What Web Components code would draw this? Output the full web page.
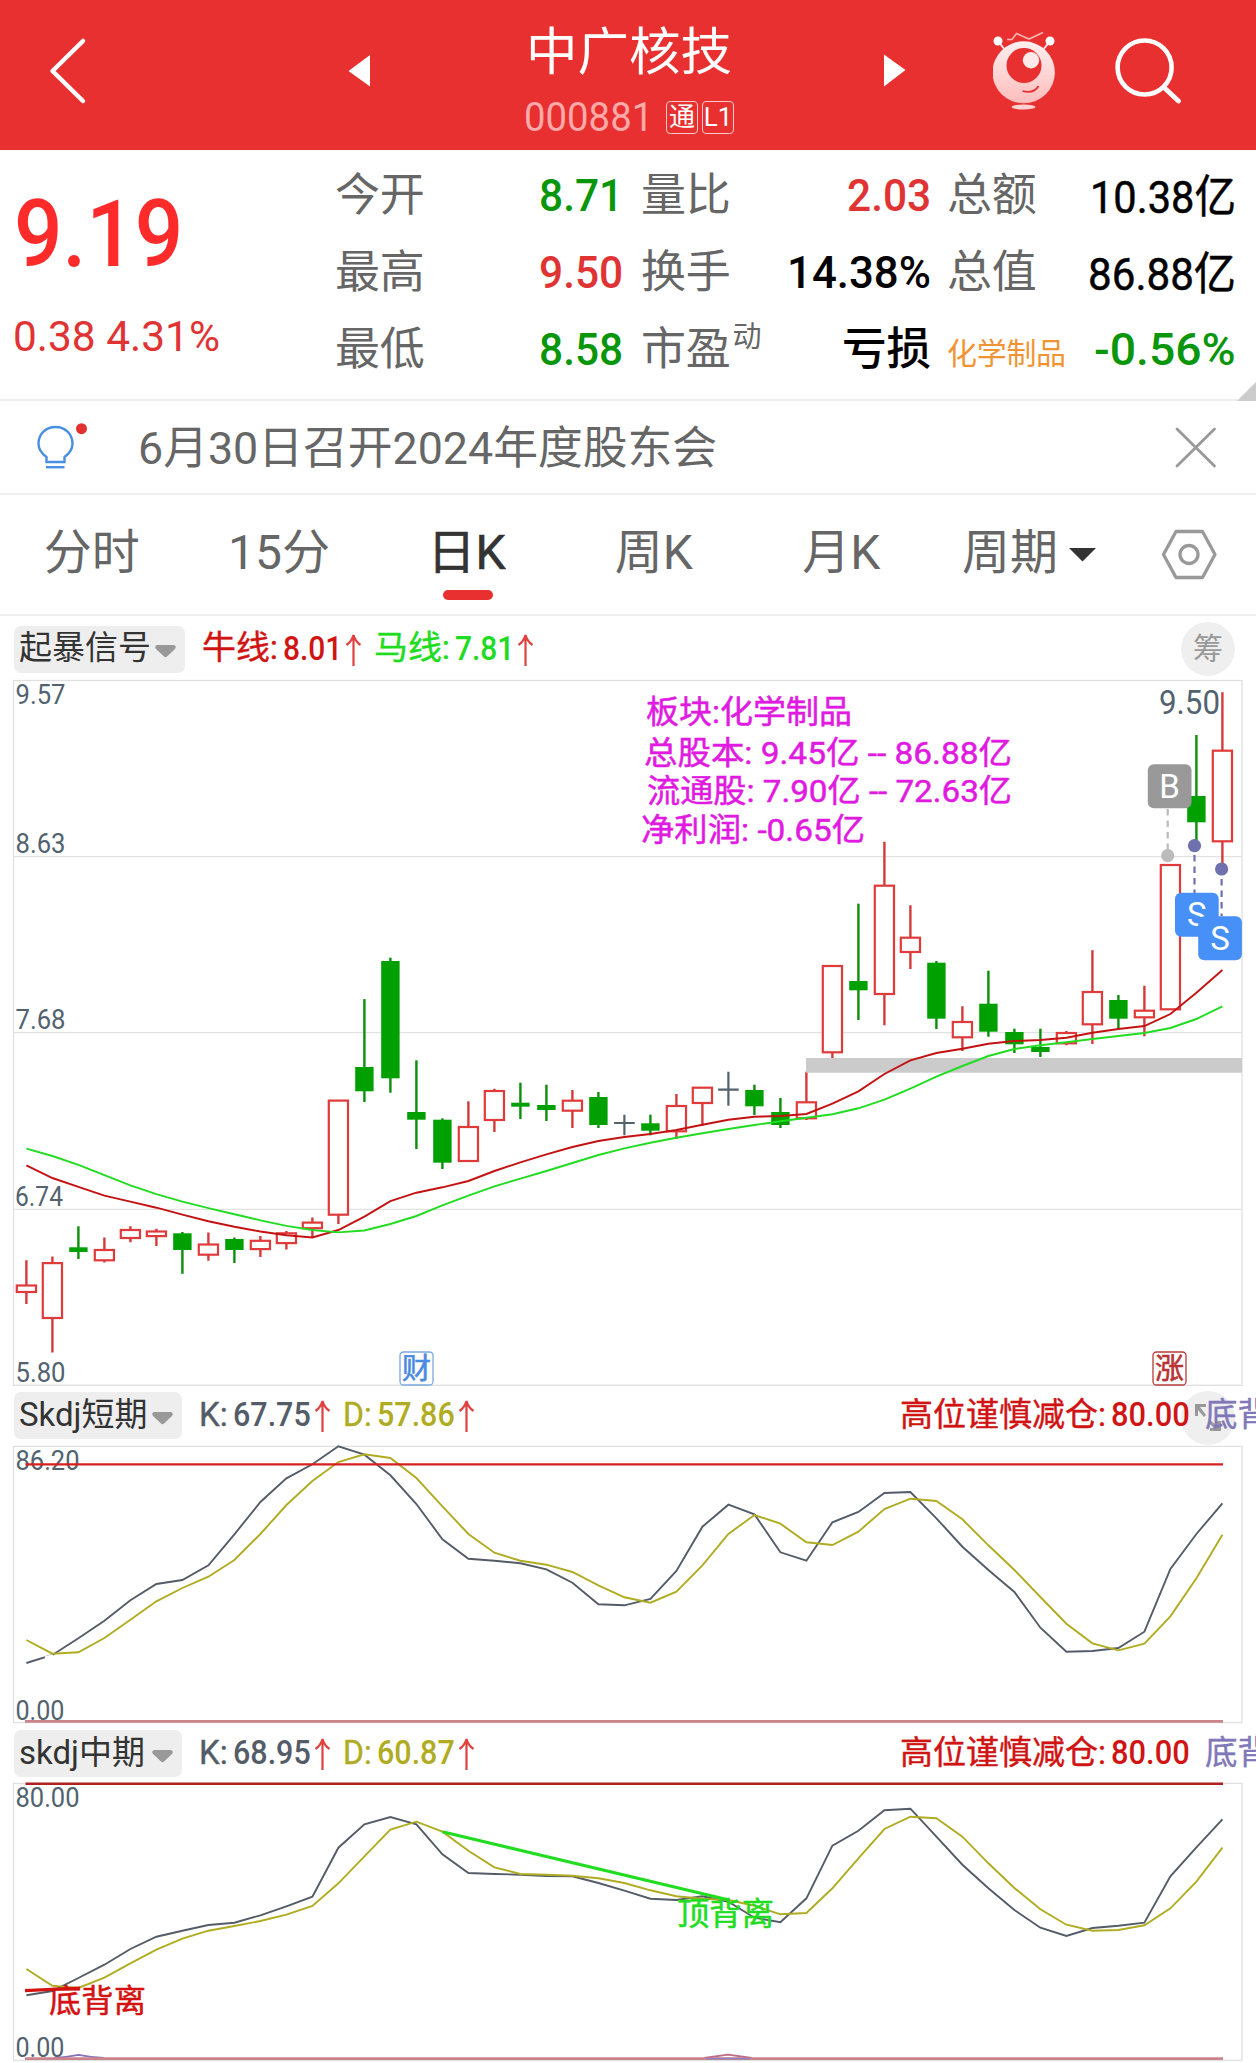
<!DOCTYPE html>
<html lang="zh-CN">
<head>
<meta charset="utf-8">
<title>中广核技 000881</title>
<style>
html,body{
	margin:0;
	background:#fff;
}
body{
	width:1256px;
	height:2063px;
	overflow:hidden;
	font-family:Roboto,"Noto Sans CJK SC",sans-serif;
	color:#666;
}
</style>
</head>
<body>
<stock-page></stock-page>

<template id="header-tpl">
<style>
:host{
	display:grid;
	grid-template-columns:348px 178px 205px 153px 109px 1fr;
	height:150px;
	background:#e83030;
	color:#fff;
}
svg{
	display:block;
	height:150px;
}
.title{
	padding-top:27px;
	display:flex;
	flex-direction:column;
	gap:20px;
}
.name{
	font-size:51px;
	line-height:52px;
	white-space:nowrap;
}
.code{
	display:flex;
	align-items:center;
	gap:4px;
	height:36px;
	margin:0 -6px 0 -2px;
	font-size:41px;
	line-height:1;
}
.code fit-text{
	color:#ffa9a9;
	margin-right:9px;
}
.tag{
	box-sizing:border-box;
	width:32px;
	height:33px;
	border:1.5px solid #ffc9c9;
	border-radius:4px;
	font-size:26px;
	line-height:31px;
	text-align:center;
	flex:none;
}
</style>
<svg width="348" viewBox="0 0 348 150"><path d="M83 41L52.500 71L83 101" fill="none" stroke="#fff" stroke-width="4.500" stroke-linecap="round" stroke-linejoin="round"/></svg>
<svg width="178" viewBox="348 0 178 150"><path d="M348.500 71L370 55V86.500Z" fill="#fff"/></svg>
<div class="title">
	<div class="name"><fit-text w="206"><slot name="name"></slot></fit-text></div>
	<div class="code"><fit-text w="129"><slot name="code"></slot></fit-text><span class="tag">通</span><span class="tag">L1</span></div>
</div>
<svg width="153" viewBox="731 0 153 150"></svg>
<svg width="109" viewBox="884 0 109 150"><path d="M905.500 70L884 54.500V86.500Z" fill="#fff"/></svg>
<svg width="263" viewBox="993 0 263 150">
	<defs><linearGradient id="body" x1="0" y1="0" x2="0" y2="1"><stop offset="0" stop-color="#fff0f0"/><stop offset="1" stop-color="#ffbcbc"/></linearGradient></defs>
	<g fill="none" stroke="#ffe4e4" stroke-width="2">
		<path d="M998 41L1005 50M1050 41L1043 50"/>
		<path d="M1007 39.500H1012L1016.500 33.500L1029 39L1043 32.500" stroke="#ffb3b3" stroke-width="1.600"/>
	</g>
	<circle cx="998" cy="41" r="4.500" fill="#fff"/><circle cx="1050" cy="41" r="4.500" fill="#fff"/>
	<ellipse cx="1023.700" cy="72.300" rx="31.200" ry="31" fill="url(#body)"/>
	<circle cx="1024" cy="65.500" r="17.500" fill="#e83030"/>
	<circle cx="1031" cy="60.300" r="8.200" fill="#ffe9e9"/>
	<path d="M1022.500 91Q1034 94 1038.500 86" fill="none" stroke="#e83030" stroke-width="1.800"/>
	<ellipse cx="1023.500" cy="107" rx="12" ry="2.500" fill="#ffd2d2"/>
	<circle cx="1144.600" cy="67.500" r="27" fill="none" stroke="#fff" stroke-width="4.600"/>
	<path d="M1164 87.500L1178.500 101" stroke="#fff" stroke-width="4.800" stroke-linecap="round"/>
</svg>
</template>

<template id="quote-tpl">
<style>
:host{
	display:grid;
	grid-template-columns:336px 287px 289px 287px;
	grid-template-rows:repeat(3,77px);
	box-sizing:border-box;
	height:251px;
	padding-top:7px;
	border-bottom:2px solid #efefef;
	position:relative;
	font-size:45px;
	line-height:1;
}
.last{
	grid-row:1 / 4;
	display:flex;
	flex-direction:column;
	color:#ff2a2a;
}
.price{
	margin:32px 0 0 14px;
	font-size:92px;
	font-weight:500;
}
.change{
	margin:35px 0 0 13px;
	font-size:42px;
	color:#e03434;
}
::slotted(quote-item:nth-child(3n+1)){
	margin-left:-1px;
}
::slotted(quote-item:nth-child(3n+2)){
	margin-left:18px;
	margin-right:-19px;
}
::slotted(quote-item:nth-child(3n)){
	margin-left:35px;
	margin-right:-37px;
}
.corner{
	position:absolute;
	right:0;
	bottom:-2px;
	width:19px;
	height:19px;
	background:#ccc;
	clip-path:polygon(100% 0,100% 100%,0 100%);
}
</style>
<div class="last">
	<fit-text class="price" w="169">9.19</fit-text>
	<fit-text class="change" w="207">0.38 4.31%</fit-text>
</div>
<slot></slot>
<div class="corner"></div>
</template>

<template id="notice-tpl">
<style>
:host{
	display:flex;
	align-items:center;
	box-sizing:border-box;
	height:94px;
	border-bottom:2px solid #efefef;
	font-size:45px;
	line-height:1;
}
.text{
	width:1030px;
	padding-top:2px;
}
</style>
<svg width="138" height="92" viewBox="0 401 138 92" fill="none" stroke="#4a90e2" stroke-width="2.400">
	<path d="M46.500 462V457C41.500 453.500 38.500 449 38.500 443.500C38.500 434 46 427 55.500 427S72.500 434 72.500 443.500C72.500 449 69.500 453.500 64.500 457V462Z"/>
	<path d="M46 467.200H64.500"/>
	<circle cx="81.500" cy="428.700" r="5.500" fill="#e03030" stroke="none"/>
</svg>
<div class="text"><fit-text w="579"><slot></slot></fit-text></div>
<svg width="88" height="92" viewBox="1168 401 88 92"><path d="M1177 429L1214.500 466M1214.500 429L1177 466" stroke="#999" stroke-width="2.800" stroke-linecap="round"/></svg>
</template>

<template id="tabs-tpl">
<style>
:host{
	display:flex;
	box-sizing:border-box;
	height:121px;
	border-bottom:2px solid #efefef;
	font-size:48px;
	line-height:116px;
}
.tab{
	flex:none;
	width:187.4px;
	text-align:center;
}
.tab span{
	margin-right:4px;
}
.on{
	color:#333;
	-webkit-text-stroke:.6px #333;
}
.on i{
	display:block;
	width:50px;
	height:10px;
	margin:-21px auto 0;
	border-radius:5px;
	background:#e83030;
}
.more{
	width:98px;
	margin-left:25px;
	white-space:nowrap;
}
svg{
	display:block;
}
</style>
<div class="tab"><span>分时</span></div>
<div class="tab"><span>15分</span></div>
<div class="tab on"><span>日K</span><i></i></div>
<div class="tab"><span>周K</span></div>
<div class="tab"><span>月K</span></div>
<div class="more">周期</div>
<svg width="196" height="119" viewBox="1060 495 196 119">
	<path d="M1069 548H1096L1082.500 561.500Z" fill="#333"/>
	<g fill="none" stroke="#999" stroke-width="3.300" stroke-linejoin="round">
		<path d="M1176 531.500H1202.500L1215 554.500L1202.500 577.500H1176L1163.500 554.500Z"/>
		<circle cx="1189" cy="554.500" r="9"/>
	</g>
</svg>
</template>

<template id="bar-tpl">
<style>
:host{
	display:flex;
	align-items:center;
	box-sizing:border-box;
	width:1256px;
	height:61px;
	padding-left:14px;
	overflow:hidden;
	font-size:33px;
	line-height:1;
}
.pill{
	box-sizing:border-box;
	display:flex;
	align-items:center;
	justify-content:space-between;
	flex:none;
	width:var(--pill,168px);
	height:47px;
	padding:0 8px 0 5px;
	margin-right:17px;
	border-radius:7px;
	background:#eee;
	color:#333;
}
.pill span{
	white-space:nowrap;
	margin-top:-3px;
}
.pill svg{
	flex:none;
	margin-top:4px;
}
</style>
<div class="pill"><span><slot name="name"></slot></span><svg width="23" height="14" viewBox="0 0 23 14"><path d="M3 1H20Q23 2 21 5L13 12.500Q11.500 14 10 12.500L2 5Q0 2 3 1Z" fill="#999"/></svg></div>
<slot></slot>
</template>

<script>
// text squeezed or stretched to a given width
class FitText extends HTMLElement{
	constructor(){
		super();
		this.attachShadow({ mode : 'open'})
		this.shadowRoot.innerHTML = `
<style>
:host{
	display:inline-block;
	flex:none;
	white-space:nowrap;
}
span{
	display:inline-block;
	transform-origin:0 50%;
}
</style><span><slot></slot></span>`;
	}
	connectedCallback(){
		const w = parseFloat(this.getAttribute('w'))
		if(!w) return
		const span = this.shadowRoot.querySelector('span')
		this.style.width = w + 'px'
		span.style.transform = 'scaleX(' + w / span.offsetWidth + ')'
	}
}

function fromTemplate(name, id){
	const template = document.getElementById(id)
	window.customElements.define(name, class extends HTMLElement{
		constructor(){
			super();
			this.attachShadow({ mode : 'open'})
			this.shadowRoot.appendChild(template.content.cloneNode(true));
		}
	});
}

class QuoteItem extends HTMLElement{
	constructor(){
		super();
		this.attachShadow({ mode : 'open'})
	}
	connectedCallback(){
		const sup = this.getAttribute('sup')
		this.shadowRoot.innerHTML = `
<style>
:host{
	display:flex;
	align-items:center;
	justify-content:space-between;
}
.label{
	color:#666;
	white-space:nowrap;
	letter-spacing:-.3px;
}
.label.small{
	font-size:30px;
	padding-top:8px;
	color:#f09433;
}
sup{
	font-size:29px;
	line-height:0;
	vertical-align:18px;
	margin-left:2px;
}
.value{
	color:${this.getAttribute('color') || '#000'};
	font-weight:${this.hasAttribute('thin') ? 400 : 500};
	${this.hasAttribute('low') ? 'padding-top:3px;-webkit-text-stroke:.5px #000;' : ''}
}
</style>
<span class="label ${this.hasAttribute('small') ? 'small' : ''}">${this.getAttribute('label')}${sup ? '<sup>' + sup + '</sup>' : ''}</span>
<fit-text class="value" w="${this.getAttribute('w')}">${this.getAttribute('value')}</fit-text>`;
	}
}

// name, value and the arrow that shows the trend
class LegendItem extends HTMLElement{
	constructor(){
		super();
		this.attachShadow({ mode : 'open'})
	}
	connectedCallback(){
		const arrow = this.hasAttribute('up') ? '<svg width="17" height="34" viewBox="0 0 17 34"><path d="M8.500 33V2M1.500 12Q7 8 8.500 2Q10 8 15.500 12" fill="none" stroke="#e04040" stroke-width="2.200"/></svg>' : ''
		this.shadowRoot.innerHTML = `
<style>
:host{
	display:flex;
	align-items:center;
	flex:none;
	margin-top:-3px;
	margin-right:12px;
	color:${this.getAttribute('color')};
}
.name{
	margin-right:5px;
	-webkit-text-stroke:.4px currentColor;
}
.value{
	margin-right:3px;
	font-size:34px;
	font-weight:500;
}
svg{
	margin-top:4px;
}
</style>
<fit-text class="name" w="${this.getAttribute('nw')}">${this.getAttribute('name')}</fit-text>
<fit-text class="value" w="${this.getAttribute('vw')}">${this.getAttribute('value')}</fit-text>${arrow}`;
	}
}

class RoundButton extends HTMLElement{
	constructor(){
		super();
		this.attachShadow({ mode : 'open'})
		this.shadowRoot.innerHTML = `
<style>
:host{
	display:flex;
	align-items:center;
	justify-content:center;
	flex:none;
	width:54px;
	height:54px;
	border-radius:50%;
	background:#efefef;
	color:#999;
	font-size:30px;
}
</style><slot></slot>`;
	}
}

const STEP = 26
const LEFT = 26.4
const at = i => +(LEFT + i * STEP).toFixed(1)
const line = (ys, color, width) => `<polyline points="${ys.map((y, i) => at(i) + ',' + y).join(' ')}" fill="none" stroke="${color}" stroke-width="${width || 1.9}"/>`
const label = (x, y, w, size, text, color, extra) => `<text x="${x}" y="${y}" font-size="${size}" fill="${color || '#52636f'}" ${w ? `textLength="${w}" lengthAdjust="spacingAndGlyphs"` : ''} ${extra || ''}>${text}</text>`

// type, high, low, body top, body bottom
const CANDLES = [
	['r',1260.3,1304,1285.5,1292],['r',1256.6,1352.5,1263.1,1318],['g',1226.3,1259,1247.3,1252],['r',1237.5,1262.6,1250,1260.3],
	['r',1226.3,1242.2,1230,1238],['r',1228.7,1246,1231.5,1236.1],['g',1232,1273.8,1233.3,1250],['r',1232.4,1260.8,1244.5,1254.7],
	['g',1237.5,1263,1239,1250],['r',1236,1257,1240.8,1249.1],['r',1231,1249.6,1233.3,1243.1],['r',1217.5,1238,1222.6,1228.2],
	['r',1100.6,1224,1100.6,1214.7],['g',999.1,1102,1067,1091.3],['g',957.7,1092.7,961,1078.3],['g',1060.3,1149,1112,1119.7],
	['g',1118.3,1169,1119.7,1162.7],['r',1101.3,1161,1127,1161],['r',1088.7,1132,1091,1120],['g',1082.7,1119,1102.7,1106.7],
	['g',1084.7,1121,1105,1110],['r',1090,1128,1100.7,1110.7],['g',1092,1128,1097,1125],['x',1114.7,1135.3,1123,1123],
	['g',1114.7,1135.3,1123.3,1130.7],['r',1094,1139,1106,1131.3],['r',1087.7,1126,1087.7,1103],['x',1071.7,1105.7,1089.7,1089.7],
	['g',1084.7,1115,1090,1106.3],['g',1098,1128,1112,1125],['r',1071.7,1120,1102.3,1118.3],['r',966,1058.7,966,1052.3],
	['g',903.7,1020,981,990.3],['r',841.7,1025.3,885.7,994],['r',905.3,969,937.7,952],['g',961,1029,962.7,1018.7],
	['r',1006.3,1051,1022,1037.3],['g',970.7,1036.7,1003.7,1031.7],['g',1028.7,1053,1032,1044.3],['g',1028.7,1057,1047,1052],
	['r',1031,1045.3,1033,1043.3],['r',950.3,1044,992,1024.3],['g',995,1029.3,1000,1018.7],['r',985.7,1036.3,1010.7,1017.3],
	['r',865,1009.3,865,1009.3],['g',735,840,796,822.3],['r',692.3,863,750.7,841.3]
]
const BULL = [1165.3,1178,1186.8,1195.6,1201.7,1207.7,1214.7,1221.2,1226.8,1231.5,1235.2,1237.5,1230,1216.6,1201.2,1192.7,1187.3,1181,1171,1162.3,1154.3,1147,1141,1137,1134,1130,1124.7,1119.7,1116.7,1116,1114,1103.7,1091.3,1074,1060.3,1053,1048.7,1043.7,1041,1040,1037.7,1032.7,1029,1026,1014,992.7,970]
const HORSE = [1148.6,1156,1164.9,1175.1,1185.4,1194.2,1201.7,1208.2,1214.2,1220.3,1225.9,1230,1232.4,1230.5,1224,1216,1205.3,1195.7,1186.3,1178.7,1171,1163,1155,1148.3,1142.7,1137.7,1133.3,1129,1125,1121.3,1117.7,1114.3,1108.3,1099.7,1088.7,1076.7,1066,1056,1049,1045.3,1042.3,1039,1036,1033,1028,1019,1006.3]
const SHORT_K = [1663,1655,1638.3,1620.7,1600.3,1584,1580,1565.3,1534.3,1502,1478.3,1464.3,1446.3,1454.7,1475.3,1504,1539.3,1558.7,1560.7,1563.3,1569.3,1582.7,1604.3,1605.3,1599,1571,1526.7,1504.7,1514.3,1552.3,1560.7,1522.3,1512,1493,1492,1518.3,1546.7,1570,1592,1627.7,1651.7,1651,1648,1631.7,1569,1534,1503.3]
const SHORT_D = [1640,1653.7,1652.3,1638,1619.7,1601.3,1588,1576.7,1560,1534,1505,1481,1462,1454.3,1458,1478,1506.3,1534,1552.7,1560.7,1564.7,1572,1585.3,1597.3,1602.7,1591.7,1565.3,1534,1515,1523.7,1542.3,1545,1531.7,1509,1498.7,1501,1519.3,1545.3,1570,1597,1623.7,1643.3,1650.3,1643.7,1616.3,1578.3,1534.7]
const MID_K = [1995.3,1991,1978,1964.7,1949,1936.7,1930.7,1925,1922.7,1915.3,1906.3,1896.7,1847.7,1824.3,1817,1824.3,1854.3,1873,1874,1874.7,1876,1876.3,1883,1890.7,1898.7,1900,1896.3,1901.7,1917.7,1922.3,1898.3,1845.7,1830.7,1810.3,1808.7,1836.7,1864.7,1888.3,1910,1927.7,1936,1928,1925.7,1922.7,1876.3,1847.3,1819.3]
const MID_D = [1969,1985.7,1988,1977.7,1963.3,1949.7,1938.7,1930.7,1926,1921,1914.7,1906,1883.3,1856.3,1829.7,1821.7,1831.7,1850.7,1867.3,1874,1874.7,1875.7,1878.3,1883,1890.3,1896.3,1898.7,1900,1905.7,1914.3,1913,1888.3,1858.3,1829,1816.7,1818.3,1836.7,1863.3,1888,1909.3,1924.7,1930.7,1930,1925.3,1908.3,1881.7,1847.7]

class BaseChart extends HTMLElement{
	constructor(){
		super();
		this.attachShadow({ mode : 'open'})
	}
	frame(top, height, y1, y2, content){
		this.shadowRoot.innerHTML = `
<style>
:host{
	display:block;
}
svg{
	display:block;
}
</style>
<svg width="1256" height="${height}" viewBox="0 ${top} 1256 ${height}">
<rect x="13.500" y="${y1}" width="1228.500" height="${y2 - y1}" fill="none" stroke="#e0e0e0" stroke-width="1.300"/>
${content}
</svg>`;
	}
}

class KlineChart extends BaseChart{
	candle(c, i){
		const [type, high, low, top, bottom] = c
		const x = at(i)
		if(type == 'x'){
			return `<path d="M${x} ${high}V${low}M${x - 10.3} ${top}H${x + 10.3}" stroke="#52636f" stroke-width="2.200"/>`
		}
		if(type == 'g'){
			return `<path d="M${x} ${high}V${low}" stroke="#0b8f0b" stroke-width="2.400"/><rect x="${x - 9.2}" y="${top}" width="18.400" height="${bottom - top}" fill="#00a000"/>`
		}
		return `<path d="M${x} ${high}V${top}M${x} ${bottom}V${low}" stroke="#d23c3c" stroke-width="2.400"/><rect x="${x - 9.6}" y="${top}" width="19.200" height="${bottom - top}" fill="#fff" stroke="#e03a3a" stroke-width="2.200"/>`
	}
	marker(x, y, text, color, tx, y1, y2, dot){
		return `<path d="M${tx} ${y1}V${y2}" stroke="${dot}" stroke-width="2.200" stroke-dasharray="6.500 5"/>
<rect x="${x}" y="${y}" width="43.700" height="44" rx="6" fill="${color}"/>
<text x="${x + 21.8}" y="${y + 33.5}" font-size="33" text-anchor="middle" fill="#fff">${text}</text>`
	}
	connectedCallback(){
		const m = '#e01ae0'
		const bold = 'stroke="#e01ae0" stroke-width=".5"'
		this.frame(677, 709, 680.5, 1385.3, `
<path d="M13 856.700H1242M13 1032.700H1242M13 1209.300H1242" stroke="#e2e2e2" stroke-width="1.300"/>
${label(15.5, 704, 50, 28, '9.57')}
${label(15.5, 853, 50, 28, '8.63')}
${label(15.5, 1029, 50, 28, '7.68')}
${label(15, 1205.5, 48, 28, '6.74')}
${label(15.5, 1381.5, 50, 28, '5.80')}
${CANDLES.map((c, i) => this.candle(c, i)).join('')}
<rect x="806" y="1058" width="436" height="14.700" fill="#cbcbcb"/>
${line(BULL, '#c41212')}
${line(HORSE, '#22dc22')}
${label(646, 723, 206, 32, '板块:化学制品', m, bold)}
${label(644, 764, 368, 32, '总股本: 9.45亿 -- 86.88亿', m, bold)}
${label(647, 801.5, 365, 32, '流通股: 7.90亿 -- 72.63亿', m, bold)}
${label(641, 841, 224, 32, '净利润: -0.65亿', m, bold)}
${label(1159, 714, 61, 34, '9.50')}
${this.marker(1147.8, 764.3, 'B', '#999', 1167.7, 809, 850, '#bbb')}
<circle cx="1167.700" cy="855.700" r="6.600" fill="#bbb"/>
${this.marker(1175, 892.7, 'S', '#4790f8', 1194.5, 855, 893, '#6f70ae')}
<circle cx="1194.500" cy="845.700" r="6.600" fill="#6f70ae"/>
${this.marker(1198.2, 916.2, 'S', '#4790f8', 1221.6, 879, 916, '#6f70ae')}
<circle cx="1221.600" cy="869" r="6.600" fill="#6f70ae"/>
<rect x="400" y="1352" width="33" height="33" rx="3.500" fill="#fff" stroke="#7aa9e0" stroke-width="1.300"/>
${label(416.5, 1379, 0, 29, '财', '#4a8ae0', 'text-anchor="middle" stroke="#4a8ae0" stroke-width=".6"')}
<rect x="1153" y="1352" width="33" height="33" rx="3.500" fill="#fff" stroke="#b83c3c" stroke-width="1.300"/>
${label(1169.5, 1379, 0, 29, '涨', '#b83434', 'text-anchor="middle" stroke="#b83434" stroke-width=".6"')}`)
	}
}

class ShortChart extends BaseChart{
	connectedCallback(){
		this.frame(1445, 279, 1446.4, 1722.6, `
${line(SHORT_K, '#545c68')}
<path d="M45 1658L53 1655.500" stroke="#fff" stroke-width="3"/>
${line(SHORT_D, '#b0ac22')}
${label(15.5, 1470, 64, 28, '86.20')}
<path d="M25.500 1464.400H1223" stroke="#d81e1e" stroke-width="2.400"/>
${label(15.5, 1719.5, 49, 28, '0.00')}
<path d="M25 1721.300H1223" stroke="#cb858a" stroke-width="2.800"/>`)
	}
}

class MidChart extends BaseChart{
	connectedCallback(){
		this.frame(1782, 281, 1783.4, 2060.4, `
${line(MID_K, '#545c68')}
${line(MID_D, '#b0ac22')}
<path d="M25.500 1783.800H1223" stroke="#b02020" stroke-width="2.600"/>
<path d="M54 2058Q66 2057 78.500 2054.800Q91 2057 104 2058" fill="none" stroke="#8a70b8" stroke-width="1.800"/>
<path d="M704 2058L728 2054.700L752 2058" fill="none" stroke="#c06a80" stroke-width="1.800"/>
<path d="M25 2058.700H1223" stroke="#cb858a" stroke-width="2.800"/>
<path d="M706 2058.500H750" stroke="#8a80c8" stroke-width="1.600"/>
<path d="M442.400 1831.700L729 1900" stroke="#22dc22" stroke-width="3.200"/>
<path d="M25 1990.700L80 1988" stroke="#d41212" stroke-width="3.200"/>
${label(677, 1924.5, 97, 32, '顶背离', '#22dc22', 'stroke="#22dc22" stroke-width=".5"')}
${label(49, 2011.5, 97, 32, '底背离', '#d41212', 'stroke="#d41212" stroke-width=".5"')}
${label(15.5, 1807, 64, 28, '80.00')}
${label(15.5, 2056.5, 49, 28, '0.00')}`)
	}
}

class StockPage extends HTMLElement{
	constructor(){
		super();
		this.attachShadow({ mode : 'open'})
		this.shadowRoot.innerHTML = `
<style>
:host{
	display:flex;
	flex-direction:column;
	width:1256px;
	height:2063px;
	overflow:hidden;
	background:#fff;
}
.first{
	--pill:171px;
	padding-top:5px;
}
.second{
	height:59px;
}
.third{
	height:58px;
	padding-top:1px;
}
.right{
	position:relative;
	display:flex;
	align-items:center;
	flex:none;
	width:356px;
	margin-left:auto;
}
.chips{
	margin:0 21px 0 auto;
}
.hint{
	position:absolute;
	left:281px;
	top:-9px;
}
.over{
	position:relative;
}
</style>
<stock-header><span slot="name">中广核技</span><span slot="code">000881</span></stock-header>
<stock-quote>
<quote-item label="今开" value="8.71" w="84" color="#0a960a"></quote-item>
<quote-item label="量比" value="2.03" w="84" color="#e03434"></quote-item>
<quote-item label="总额" value="10.38亿" w="146" thin low></quote-item>
<quote-item label="最高" value="9.50" w="84" color="#e03434"></quote-item>
<quote-item label="换手" value="14.38%" w="144"></quote-item>
<quote-item label="总值" value="86.88亿" w="148" thin low></quote-item>
<quote-item label="最低" value="8.58" w="84" color="#0a960a"></quote-item>
<quote-item label="市盈" sup="动" value="亏损" w="89"></quote-item>
<quote-item label="化学制品" value="-0.56%" w="142" color="#0a960a" small></quote-item>
</stock-quote>
<stock-notice>6月30日召开2024年度股东会</stock-notice>
<stock-tabs></stock-tabs>
<indicator-bar class="first">
<span slot="name">起暴信号</span>
<legend-item name="牛线:" nw="76" value="8.01" vw="59" color="#d01414" up></legend-item>
<legend-item name="马线:" nw="76" value="7.81" vw="59" color="#20dc20" up></legend-item>
<round-button class="chips">筹</round-button>
</indicator-bar>
<kline-chart></kline-chart>
<indicator-bar class="second">
<span slot="name">Skdj短期</span>
<legend-item name="K:" nw="29" value="67.75" vw="78" color="#545c68" up></legend-item>
<legend-item name="D:" nw="29" value="57.86" vw="78" color="#b0ac22" up></legend-item>
<div class="right">
<round-button class="hint"><svg width="54" height="54" viewBox="0 0 54 54"><path d="M14 13H25V16H19L25 24L23 26L17 19V25H14ZM29 29L36 35V30H40V40H29V37H33L27 31Z" fill="#999"/></svg></round-button>
<legend-item class="over" name="高位谨慎减仓:" nw="206" value="80.00" vw="79" color="#d01414"></legend-item>
<legend-item class="over" name="底背" nw="65" value="" vw="" color="#8078b8"></legend-item>
</div>
</indicator-bar>
<short-chart></short-chart>
<indicator-bar class="third">
<span slot="name">skdj中期</span>
<legend-item name="K:" nw="29" value="68.95" vw="78" color="#545c68" up></legend-item>
<legend-item name="D:" nw="29" value="60.87" vw="78" color="#b0ac22" up></legend-item>
<div class="right">
<legend-item class="over" name="高位谨慎减仓:" nw="206" value="80.00" vw="79" color="#d01414"></legend-item>
<legend-item class="over" name="底背" nw="65" value="" vw="" color="#8078b8"></legend-item>
</div>
</indicator-bar>
<mid-chart></mid-chart>`;
	}
}

fromTemplate('stock-header', 'header-tpl')
fromTemplate('stock-quote', 'quote-tpl')
fromTemplate('stock-notice', 'notice-tpl')
fromTemplate('stock-tabs', 'tabs-tpl')
fromTemplate('indicator-bar', 'bar-tpl')
window.customElements.define('quote-item',QuoteItem);
window.customElements.define('legend-item',LegendItem);
window.customElements.define('round-button',RoundButton);
window.customElements.define('kline-chart',KlineChart);
window.customElements.define('short-chart',ShortChart);
window.customElements.define('mid-chart',MidChart);
window.customElements.define('stock-page',StockPage);
window.customElements.define('fit-text',FitText);
</script>
</body>
</html>
